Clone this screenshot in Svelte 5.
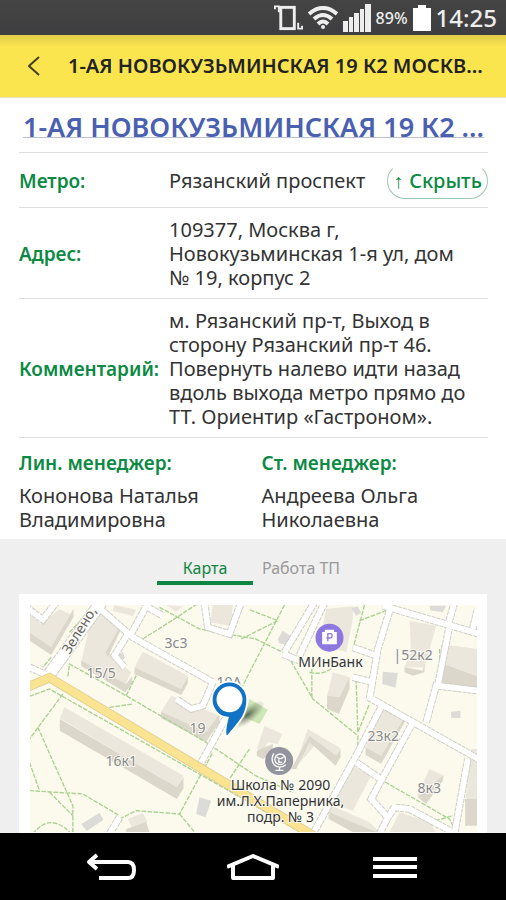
<script lang="ts">
  const address = '1-АЯ НОВОКУЗЬМИНСКАЯ 19 К2';

  const managers = [
    { role: 'Лин. менеджер:', name: 'Кононова Наталья Владимировна' },
    { role: 'Ст. менеджер:', name: 'Андреева Ольга Николаевна' }
  ];

  const tabs = ['Карта', 'Работа ТП'];
  let activeTab = $state('Карта');

  // Map geometry, in thirds of a pixel
  const roads = [
    'M90 235L150 262',
    'M395 135L440 52L490 80',
    'M385 135L345 200L375 235',
    'M615 40L625 115L690 135L725 40',
    'M600 530L680 385',
    'M80 55L130 92L170 40',
    'M280 40L400 145L640 280L610 350L575 360L530 330',
    'M855 190L945 40',
    'M900 200L975 40',
    'M850 195L900 215',
    'M1110 330L1135 180L1175 50',
    'M1150 50L1440 135',
    'M1345 110L1365 40',
    'M1420 120L1434 60',
    'M1350 110L1315 290',
    'M1280 400L1310 290L1440 305',
    'M1060 175L1130 200',
    'M1060 265L1115 278',
    'M1108 325L1440 512',
    'M1150 345L1070 500L940 735',
    'M1240 400L1115 630L1165 685L1185 655L1230 660L1370 735',
    'M1070 520L1150 575',
    'M1405 510L1365 735',
    'M1165 685L1140 735',
    'M360 685L330 735'
  ];

  const paths = [
    'M430 150L540 80L600 40',
    'M480 55L600 120L768 150L850 190',
    'M205 262L210 225L380 320L620 460L768 560L880 610',
    'M90 322L150 300L700 612L900 728',
    'M190 315L90 450M115 415L220 650V729',
    'M90 520L120 605M90 605L250 615L360 680',
    'M150 610L220 680M360 690L410 665L540 675L640 490',
    'M540 675L590 735M100 735Q150 670 210 729',
    'M330 355L400 345M380 320L410 260',
    'M855 48L750 250L690 370M750 480L690 570',
    'M725 150L835 95L750 62',
    'M865 200L940 330L1075 440V480',
    'M937 240V325M930 250Q970 260 1000 235',
    'M1095 48L1060 180M1070 270L1075 430L1110 345',
    'M1080 95L1160 65M1070 515L1150 575L1350 690L1370 729',
    'M1290 700L1360 680M1320 180L1325 300',
    'M210 130L290 45M155 205L130 235'
  ];

  const walls = [
    'M90 155L155 198L222 85V60L155 175L90 130Z',
    'M245 215L380 285L398 262V282L378 310L245 232Z',
    'M405 235L545 300L565 262V283L545 318L405 255Z',
    'M485 368L620 430L660 375V400L620 458L485 388Z',
    'M181 390L532 595L552 565V598L532 630L181 425Z',
    'M318 190L365 105V120L325 205Z',
    'M772 485L820 465V490L790 510L772 500Z',
    'M875 540L930 440L1010 500L1023 480V505L1008 530L930 460L890 540Z',
    'M983 320L1020 325L1050 265V300L1018 375L983 360Z',
    'M1215 235L1270 245L1275 225V250L1240 260L1215 250Z',
    'M1320 220L1434 262V300L1320 280Z',
    'M1098 475L1145 500L1215 385V400L1145 524L1098 498Z',
    'M990 670L1060 700L1130 729H1060L990 690Z',
    'M1255 625L1330 560V575L1280 645Z',
    'M1397 630H1434V710H1397Z',
    'M380 720L440 700L450 729H380Z'
  ];

  const roofs = [
    'M90 75L125 105L180 60L222 80L155 180L90 140Z',
    'M285 48L370 110L325 190L395 250L375 290L245 220Z',
    'M345 48L410 62L400 82L340 65Z',
    'M430 188L565 260L545 300L405 235Z',
    'M515 320L660 380L620 435L485 368Z',
    'M195 355L552 560L532 595L181 388Z',
    'M640 48H700L695 112L632 100Z',
    'M500 48L550 52L530 68Z',
    'M795 410L848 435L835 465L805 460L790 490L772 480Z',
    'M925 420L1023 478L1008 505L945 470L920 500L885 535Z',
    'M980 60L1060 52V90L1040 190L960 165Z',
    'M1000 250L1050 265L1020 335L983 322Z',
    'M1230 95L1310 110L1275 235L1215 235L1235 190Z',
    'M1325 165L1434 180V262L1320 220Z',
    'M1155 345L1220 375L1145 500L1098 475Z',
    'M1060 530L1115 560L1060 665L990 640Z',
    'M985 645L1110 700L1140 729H1060L985 690Z',
    'M1200 670L1290 700L1310 729H1170Z',
    'M1290 540L1335 560L1280 640L1252 620Z',
    'M1415 480H1434V640H1397Z',
    'M385 690L430 672L445 700L400 720Z'
  ];

  const sheds = [
    'M590 675L600 625L635 635L618 685Z',
    'M245 705L300 672L312 692L262 726Z',
    'M352 200L370 188L376 208L358 220Z',
    'M835 150L850 125L872 140L862 168L838 162Z',
    'M1150 248L1195 252L1188 296L1148 285Z',
    'M1355 368L1383 365V388L1355 386Z',
    'M1055 58L1075 52L1085 72L1070 80Z',
    'M1290 50H1340L1330 70L1292 64Z'
  ];

  const houses = [
    { text: '15/5', x: 57, y: 73 },
    { text: '3с3', x: 135, y: 43 },
    { text: '19А', x: 187, y: 82 },
    { text: '19', x: 160, y: 128 },
    { text: '16к1', x: 76, y: 161 },
    { text: '|52к2', x: 364, y: 55 },
    { text: '23к2', x: 338, y: 136 },
    { text: '8к3', x: 388, y: 188 }
  ];
</script>

<div class="screen">
  <div class="status">
    <svg class="vibrate" viewBox="0 0 30 28" aria-hidden="true">
      <path d="M1 5V2H5V8M25 19V25H29V22" />
      <rect x="7" y="3" width="14" height="22" />
    </svg>
    <svg class="wifi" viewBox="0 0 30 24" aria-hidden="true">
      <path d="M1 8Q15 -4 29 8M6 13Q15 5 24 13M10 18Q15 13 20 18" />
      <circle cx="15" cy="21" r="2" />
    </svg>
    <svg class="signal" viewBox="0 0 28 28" aria-hidden="true">
      <path d="M0 17H5V28H0ZM6 13H10V28H6ZM11 9H16V28H11ZM17 5H21V28H17ZM22 0H28V28H22Z" />
    </svg>
    <span class="percent">89%</span>
    <svg class="battery" viewBox="0 0 18 26" aria-hidden="true">
      <path d="M5 0H13V3H18V26H0V3H5Z" />
    </svg>
    <span class="clock">14:25</span>
  </div>

  <header class="bar">
    <button class="back" type="button" aria-label="Назад">
      <svg viewBox="0 0 12 20"><path d="M11 1L1 10L11 19" /></svg>
    </button>
    <h1>{address} МОСКВ...</h1>
  </header>

  <main>
    <section class="details">
      <h2><a href="#map">{address} ...</a></h2>

      <dl>
        <div class="row">
          <dt>Метро:</dt>
          <dd>Рязанский проспект</dd>
          <button class="hide" type="button"><span class="arrow">↑</span>Скрыть</button>
        </div>
        <div class="row">
          <dt>Адрес:</dt>
          <dd>109377, Москва г,<br />Новокузьминская 1-я ул, дом<br />№ 19, корпус 2</dd>
        </div>
        <div class="row">
          <dt>Комментарий:</dt>
          <dd>
            м. Рязанский пр-т, Выход в<br />сторону Рязанский пр-т 46.<br />Повернуть налево идти назад<br
            />вдоль выхода метро прямо до<br />ТТ. Ориентир «Гастроном».
          </dd>
        </div>
      </dl>

      <div class="managers">
        {#each managers as manager}
          <div>
            <h3>{manager.role}</h3>
            <p>{manager.name}</p>
          </div>
        {/each}
      </div>
    </section>

    <div class="tabs" role="tablist">
      {#each tabs as tab}
        <button
          type="button"
          role="tab"
          class:active={activeTab === tab}
          aria-selected={activeTab === tab}
          onclick={() => (activeTab = tab)}
        >{tab}</button>
      {/each}
    </div>

    <section class="card" id="map">
      <svg class="map" viewBox="0 0 448 227" preserveAspectRatio="xMidYMin slice" role="img" aria-label="Карта">
        <defs>
          <radialGradient id="shade">
            <stop offset="0" stop-color="#4c5a45" stop-opacity="0.9" />
            <stop offset="1" stop-color="#7c8a70" stop-opacity="0" />
          </radialGradient>
        </defs>
        <rect width="448" height="227" fill="#fbfaec" />
        <g transform="scale(0.33333) translate(-90 -48)">
          <path d="M750 330L805 362L780 405L735 385Z" fill="#cfe6b8" />
          {#each roofs as d}<path {d} fill="#ebe7dc" />{/each}
          {#each walls as d}<path {d} fill="#dcd7cb" />{/each}
          {#each sheds as d}<path {d} fill="#dcdbd8" />{/each}
          {#each paths as d}<path {d} class="trail" />{/each}
          <path d="M150 255L305 40" class="edge wide" />
          {#each roads as d}<path {d} class="edge" />{/each}
          <path d="M150 255L305 40" class="street wide" />
          {#each roads as d}<path {d} class="street" />{/each}
          <path d="M80 296L150 266L950 745" class="avenue-edge" />
          <path d="M80 296L150 266L950 745" class="avenue" />
        </g>

        <text class="street-name" transform="translate(40 50) rotate(-58)">Зелено,</text>
        {#each houses as house}
          <text class="house" x={house.x} y={house.y}>{house.text}</text>
        {/each}

        <g transform="scale(0.33333) translate(-90 -48)">
          <ellipse cx="745" cy="377" rx="62" ry="24" transform="rotate(-38 745 377)" fill="url(#shade)" />
          <path
            d="M637 331A53 53 0 1 1 743 331C743 385 712 405 681 445Q673 430 685 386A53 53 0 0 1 637 331Z"
            fill="#1272c4"
            stroke="#fff"
            stroke-width="5"
          />
          <circle cx="690" cy="331" r="39" fill="#fff" />

          <circle cx="990" cy="146" r="42" fill="#8d78df" />
          <path d="M968 129H976V122H1004V129H1012V166H968Z" fill="#fff" />
          <path d="M985 157V134H992Q998 134 998 140T992 147H981" fill="none" stroke="#8d78df" stroke-width="4" />

          <circle cx="839" cy="516" r="42" fill="#92949e" />
          <g fill="none" stroke="#fff" stroke-width="4">
            <circle cx="842" cy="511" r="16" />
            <path d="M831 503Q842 515 853 503M838 511V520H848M823 493Q812 512 824 527Q840 542 859 527M840 536V543M828 544H852" />
          </g>
        </g>

        <text class="place" x="301" y="62">МИнБанк</text>
        <text class="place" x="251" y="185">Школа № 2090</text>
        <text class="place" x="251" y="201">им.Л.Х.Паперника,</text>
        <text class="place" x="251" y="217">подр. № 3</text>
      </svg>
    </section>
  </main>

  <nav>
    <button type="button" aria-label="Назад">
      <svg viewBox="0 0 52 28"><path d="M14 25H43Q49 25 49 17T43 9H4M12 2L4 9L12 16" /></svg>
    </button>
    <button type="button" aria-label="Домой">
      <svg viewBox="0 0 52 28"><path d="M0 14L26 3L52 14M6 12V25H46V12" /></svg>
    </button>
    <button type="button" aria-label="Меню">
      <svg viewBox="0 0 52 28"><path d="M4 6H48M4 14H48M4 23H48" /></svg>
    </button>
  </nav>
</div>

<style>
  :global(body) {
    margin: 0;
  }

  .screen {
    display: flex;
    flex-direction: column;
    min-height: 100vh;
    background: #efefef;
    color: #333;
    font-family: 'Noto Sans', 'Open Sans', sans-serif;
    font-size: 20px;
    line-height: 24px;
  }

  button {
    padding: 0;
    border: 0;
    background: none;
    color: inherit;
    font: inherit;
    cursor: pointer;
  }

  svg {
    display: block;
    fill: none;
  }

  .status {
    display: flex;
    align-items: center;
    justify-content: flex-end;
    gap: 5px;
    height: 35px;
    padding-right: 9px;
    background: linear-gradient(#444, #3e3e40);
    color: #eee;
  }

  .vibrate {
    width: 29px;
    height: 28px;
    stroke: #eee;
    stroke-width: 2;
  }

  .vibrate rect {
    stroke-width: 3;
  }

  .wifi {
    width: 30px;
    height: 24px;
    stroke: #eee;
    stroke-width: 4;
  }

  .wifi circle {
    fill: #eee;
    stroke: none;
  }

  .signal {
    width: 28px;
    height: 28px;
    fill: #eee;
  }

  .battery {
    width: 18px;
    height: 26px;
    fill: #fff;
  }

  .percent {
    font-size: 16px;
    font-weight: 500;
  }

  .clock {
    font-size: 24px;
    font-weight: 500;
  }

  .bar {
    display: flex;
    align-items: center;
    height: 63px;
    background: linear-gradient(#e0cc48, #fae54f 12px);
    border-bottom: 1px solid #e8e3c0;
    box-sizing: border-box;
    color: #222;
  }

  .back {
    display: flex;
    justify-content: center;
    width: 68px;
    flex: none;
  }

  .back svg {
    width: 12px;
    height: 20px;
    stroke: #443f20;
    stroke-width: 2;
  }

  h1 {
    margin: 0;
    font-size: 20px;
    font-weight: 600;
    white-space: nowrap;
  }

  .details {
    padding: 0 18px 7px 19px;
    background: #fff;
  }

  h2 {
    margin: 0;
    padding: 11px 0 8px;
    text-align: center;
    font-size: 27px;
    font-weight: 600;
    line-height: 35px;
    white-space: nowrap;
  }

  h2 a {
    color: #4a60b0;
    text-decoration: underline 1px #b9bfd6;
    text-underline-offset: 0;
    text-decoration-skip-ink: none;
  }

  dl {
    margin: 0;
    border-bottom: 1px solid #dedede;
  }

  .row {
    display: flex;
    align-items: center;
    padding: 10px 0 8px;
    border-top: 1px solid #dedede;
  }

  dt {
    width: 150px;
    flex: none;
    color: #0b8a43;
    font-size: 19px;
    font-weight: 600;
  }

  dd {
    flex: 1;
    margin: 0;
    white-space: nowrap;
  }

  .hide {
    display: flex;
    align-items: center;
    justify-content: center;
    gap: 6px;
    width: 101px;
    height: 36px;
    border: 1px solid #9ccab0;
    border-top-color: transparent;
    border-radius: 18px;
    color: #0b8a43;
    font-weight: 500;
    white-space: nowrap;
  }

  .arrow {
    font-family: 'Liberation Sans', sans-serif;
    font-weight: 400;
  }

  .managers {
    display: grid;
    grid-template-columns: 1fr 1fr;
    gap: 16px;
    padding-top: 13px;
  }

  h3 {
    margin: 0 0 9px;
    color: #0b8a43;
    font-size: 19px;
    font-weight: 600;
  }

  p {
    max-width: 200px;
    margin: 0;
  }

  .tabs {
    display: flex;
    justify-content: center;
    padding: 10px 0 9px;
    color: #999;
    font-size: 16px;
  }

  .tabs button {
    width: 96px;
    height: 36px;
    padding-top: 6px;
    border-bottom: 4px solid transparent;
  }

  .tabs .active {
    border-color: #108541;
    color: #108541;
  }

  main {
    display: flex;
    flex: 1;
    flex-direction: column;
  }

  .card {
    flex: 1;
    margin: 0 19px;
    padding: 11px 10px 0 11px;
    background: #fff;
  }

  .map {
    width: 100%;
    height: 227px;
  }

  .trail {
    stroke: #a9d191;
    stroke-width: 4;
    stroke-dasharray: 14 4;
  }

  .edge {
    stroke: #cfcdca;
    stroke-width: 23;
    stroke-dasharray: 12 3;
  }

  .street {
    stroke: #fff;
    stroke-width: 17;
  }

  .edge.wide {
    stroke-width: 40;
  }

  .street.wide {
    stroke-width: 34;
  }

  .avenue-edge {
    stroke: #dccb97;
    stroke-width: 28;
  }

  .avenue {
    stroke: #fbe491;
    stroke-width: 23;
  }

  text {
    fill: #888;
    font-size: 14px;
    stroke: #fcfbf3;
    stroke-width: 2px;
    paint-order: stroke;
  }

  .place {
    fill: #333;
    text-anchor: middle;
  }

  .street-name {
    fill: #666;
  }

  nav {
    display: flex;
    align-items: center;
    justify-content: space-between;
    height: 67px;
    padding: 0 85px;
    background: #000;
  }

  nav svg {
    width: 52px;
    height: 28px;
    stroke: #fff;
    stroke-width: 4;
    stroke-linejoin: round;
  }
</style>
